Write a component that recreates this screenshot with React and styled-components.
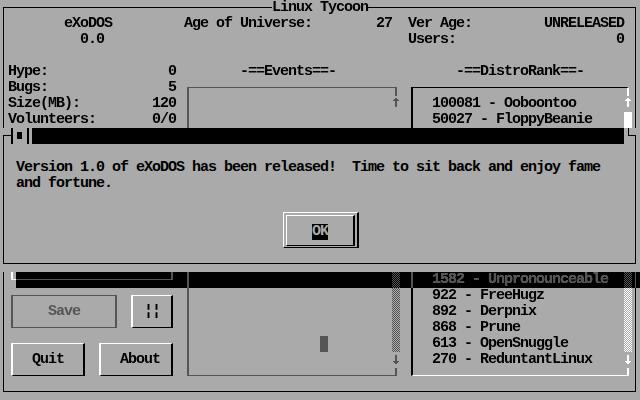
import React from "react";
import styled, { createGlobalStyle, css } from "styled-components";

const GRAY = "#aaaaaa";
const DARK = "#555555";
const WHITE = "#ffffff";
const BLACK = "#000000";

const Global = createGlobalStyle`
  html, body { margin: 0; padding: 0; background: ${GRAY}; }
  body { width: 640px; height: 400px; overflow: hidden; }
`;

/* every part sits on the 80x25 text-mode grid (8x16 cells) */
const place = css`
  grid-column: ${(p) => p.$c + 1} / span ${(p) => p.$w ?? 1};
  grid-row: ${(p) => p.$r + 1} / span ${(p) => p.$h ?? 1};
`;

const Screen = styled.div`
  display: grid;
  grid-template-columns: repeat(80, 8px);
  grid-template-rows: repeat(25, 16px);
  width: 640px;
  height: 400px;
  overflow: hidden;
  background: ${GRAY};
  color: ${BLACK};
  font-family: "Liberation Mono", "DejaVu Sans Mono", monospace;
  font-size: 15px;
  font-weight: bold;
  line-height: 16px;
  letter-spacing: -1px;
`;

const WindowFrame = styled.div`
  ${place}
  margin: 7px 4px 8px 3px;
  border: 1px solid ${BLACK};
`;

const Text = styled.div`
  ${place}
  white-space: pre;
  color: ${(p) => p.$color || "inherit"};
`;

const WindowTitle = styled(Text)`
  background: ${GRAY};
`;

const ListFrame = styled.div`
  ${place}
  margin: 7px 3px 8px 3px;
  border-style: solid;
  border-width: 1px 2px;
  border-color: ${(p) =>
    p.$sunken ? `${BLACK} ${WHITE} ${WHITE} ${BLACK}` : DARK};
`;

const MeterFrame = styled.div`
  ${place}
  margin: 7px 3px 8px 3px;
  border-style: solid;
  border-width: 1px 2px;
  border-color: ${WHITE};
`;

const Button = styled.div`
  ${place}
  margin: 7px 3px 8px 3px;
  border-style: solid;
  border-width: 1px 2px;
  border-color: ${(p) =>
    p.$disabled ? DARK : `${WHITE} ${BLACK} ${BLACK} ${WHITE}`};
  color: ${(p) => (p.$disabled ? DARK : BLACK)};
  padding: 8px 0 0 ${(p) => p.$tx * 8 - 5}px;
  white-space: pre;
`;

const ScrollBar = styled.div`
  ${place}
  display: flex;
  flex-direction: column;
  background: ${GRAY};
`;

const Thumb = styled.div`
  height: 16px;
  flex-shrink: 0;
  background: ${(p) => p.$color};
`;

const Glyph = styled.svg`
  display: block;
  flex-shrink: 0;
`;

const Cursor = styled.div`
  ${place}
  background: ${DARK};
`;

const ShadowLayer = styled.div`
  ${place}
  background: ${(p) => (p.$mode === "difference" ? GRAY : DARK)};
  mix-blend-mode: ${(p) => p.$mode};
`;

const Dialog = styled.div`
  ${place}
  z-index: 2;
  display: grid;
  grid-template-columns: repeat(80, 8px);
  grid-template-rows: repeat(9, 16px);
  background: ${GRAY};
`;

const CloseBox = styled.div`
  ${place}
  display: flex;
  align-items: stretch;
  padding-left: 3px;
  background: linear-gradient(to right, transparent 3px, ${GRAY} 3px);
`;

const CloseBracket = styled.span`
  width: 2px;
  background: ${BLACK};
`;

const CloseMark = styled.span`
  align-self: flex-start;
  width: 5px;
  height: 7px;
  margin: 4px 5px 0 4px;
  background: ${BLACK};
`;

const TitleBar = styled.div`
  ${place}
  background: ${BLACK};
`;

const TitleEnd = styled.div`
  ${place}
  background: ${GRAY};
  &::before {
    content: "";
    display: block;
    margin-left: 4px;
    width: 3px;
    height: 7px;
    border-left: 1px solid ${BLACK};
    border-bottom: 1px solid ${BLACK};
  }
`;

const OkOuter = styled.div`
  ${place}
  display: flex;
  margin: 4px 1px 8px 3px;
  border-style: solid;
  border-width: 1px 2px 1px 1px;
  border-color: ${WHITE} ${BLACK} ${BLACK} ${WHITE};
`;

const OkInner = styled.div`
  flex: 1;
  margin: 2px 2px 1px 2px;
  padding: 8px 0 0 25px;
  border-style: solid;
  border-width: 1px 2px 1px 1px;
  border-color: ${WHITE} ${BLACK} ${BLACK} ${WHITE};
`;

const OkLabel = styled.span`
  display: inline-block;
  height: 16px;
  background: ${BLACK};
  color: ${GRAY};
`;

const Arrow = ({ dir, color }) => (
  <Glyph width="8" height="16" viewBox="0 0 8 16" shapeRendering="crispEdges">
    {dir === "up" ? (
      <g fill={color}>
        <rect x="3" y="2" width="2" height="1" />
        <rect x="2" y="3" width="4" height="1" />
        <rect x="1" y="4" width="6" height="1" />
        <rect x="3" y="5" width="2" height="6" />
      </g>
    ) : (
      <g fill={color}>
        <rect x="3" y="3" width="2" height="6" />
        <rect x="1" y="9" width="6" height="1" />
        <rect x="2" y="10" width="4" height="1" />
        <rect x="3" y="11" width="2" height="1" />
      </g>
    )}
  </Glyph>
);

const Track = ({ id, color, rows }) => (
  <Glyph width="8" height={rows * 16} shapeRendering="crispEdges">
    <defs>
      <pattern id={id} width="2" height="2" patternUnits="userSpaceOnUse">
        <rect x="0" y="0" width="1" height="1" fill={color} />
        <rect x="1" y="1" width="1" height="1" fill={color} />
      </pattern>
    </defs>
    <rect width="8" height={rows * 16} fill={`url(#${id})`} />
  </Glyph>
);

const Scroller = ({ c, id, color, thumb }) => (
  <ScrollBar $c={c} $r={6} $h={17}>
    <Arrow dir="up" color={color} />
    <Thumb $color={thumb} />
    <Track id={id} color={color} rows={14} />
    <Arrow dir="down" color={color} />
  </ScrollBar>
);

const stats = [
  ["Hype:", "0"],
  ["Bugs:", "5"],
  ["Size(MB):", "120"],
  ["Volunteers:", "0/0"],
];

const ranks = [
  [6, "100081 - Ooboontoo"],
  [7, "50027 - FloppyBeanie"],
  [17, "1582 - Unpronounceable"],
  [18, "922 - FreeHugz"],
  [19, "892 - Derpnix"],
  [20, "868 - Prune"],
  [21, "613 - OpenSnuggle"],
  [22, "270 - ReduntantLinux"],
];

const T = ({ c, r, children, color }) => (
  <Text $c={c} $r={r} $w={children.length} $color={color}>
    {children}
  </Text>
);

export default function App() {
  return (
    <>
      <Global />
      <Screen>
        <WindowFrame $c={0} $r={0} $w={80} $h={25} />
        <WindowTitle $c={34} $r={0} $w={12}>Linux Tycoon</WindowTitle>

        <T c={8} r={1}>eXoDOS</T>
        <T c={10} r={2}>0.0</T>
        <T c={23} r={1}>Age of Universe:</T>
        <T c={47} r={1}>27</T>
        <T c={51} r={1}>Ver Age:</T>
        <T c={68} r={1}>UNRELEASED</T>
        <T c={51} r={2}>Users:</T>
        <T c={77} r={2}>0</T>

        {stats.map(([label, value], i) => (
          <React.Fragment key={label}>
            <T c={1} r={4 + i}>{label}</T>
            <T c={22 - value.length} r={4 + i}>{value}</T>
          </React.Fragment>
        ))}

        <T c={30} r={4}>-==Events==-</T>
        <ListFrame $c={23} $r={5} $w={27} $h={19} />
        <Scroller c={49} id="evtrack" color={DARK} thumb={GRAY} />
        <Cursor $c={40} $r={21} />

        <T c={57} r={4}>-==DistroRank==-</T>
        <ListFrame $sunken $c={51} $r={5} $w={28} $h={19} />
        {ranks.map(([row, name]) => (
          <T key={name} c={54} r={row}>{name}</T>
        ))}
        <Scroller c={78} id="rktrack" color={WHITE} thumb={WHITE} />

        <MeterFrame $c={1} $r={15} $w={21} $h={3} />
        <Button $disabled $c={1} $r={18} $w={14} $h={3} $tx={5}>Save</Button>
        <Button $c={16} $r={18} $w={6} $h={3} $tx={2}>¦¦</Button>
        <Button $c={1} $r={21} $w={10} $h={3} $tx={3}>Quit</Button>
        <Button $c={12} $r={21} $w={10} $h={3} $tx={3}>About</Button>

        <ShadowLayer $mode="difference" $c={2} $r={17} $w={78} />
        <ShadowLayer $mode="darken" $c={2} $r={17} $w={78} />

        <Dialog $c={0} $r={8} $w={80} $h={9}>
          <WindowFrame $c={0} $r={0} $w={80} $h={9} />
          <CloseBox $c={1} $r={0} $w={3}>
            <CloseBracket />
            <CloseMark />
            <CloseBracket />
          </CloseBox>
          <TitleBar $c={4} $r={0} $w={74} />
          <TitleEnd $c={78} $r={0} />
          <T c={2} r={2}>
            Version 1.0 of eXoDOS has been released!  Time to sit back and enjoy fame
          </T>
          <T c={2} r={3}>and fortune.</T>
          <OkOuter $c={35} $r={5} $w={10} $h={3}>
            <OkInner>
              <OkLabel>OK</OkLabel>
            </OkInner>
          </OkOuter>
        </Dialog>
      </Screen>
    </>
  );
}
